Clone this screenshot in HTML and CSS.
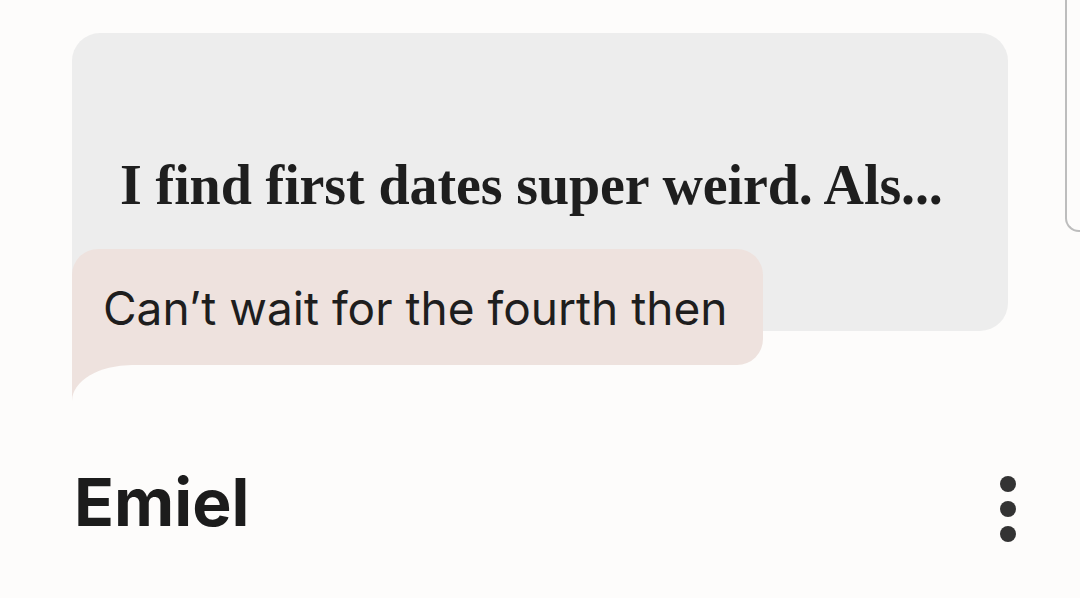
FILE: index.html
```html
<!DOCTYPE html>
<html>
<head>
<meta charset="utf-8">
<link rel="stylesheet" href="styles.css">
</head>
<body>
<div class="scrollbar"></div>
<main class="thread">
  <section class="card">
    <p class="prompt">I find first dates super weird. Als...</p>
  </section>
  <div class="bubble">
    <span class="reply">Can’t wait for the fourth then</span>
  </div>
  <header class="profile">
    <h1 class="name">Emiel</h1>
    <button class="more" aria-label="More">
      <span class="dot"></span><span class="dot"></span><span class="dot"></span>
    </button>
  </header>
</main>
</body>
</html>
```
FILE: styles.css
```css
html, body {
  margin: 0;
  padding: 0;
  background: #fdfcfb;
  width: 1080px;
  height: 598px;
  overflow: hidden;
}
body {
  font-family: "Inter", "Roboto", sans-serif;
  color: #1f1f1f;
}
.scrollbar {
  position: absolute;
  top: -20px;
  left: 1065px;
  width: 40px;
  height: 252px;
  border-left: 2px solid #bdbdbd;
  border-bottom: 2px solid #bdbdbd;
  border-bottom-left-radius: 14px;
  box-sizing: border-box;
}
.thread {
  padding: 33px 72px 0 72px;
  display: flex;
  flex-direction: column;
  align-items: flex-start;
}
.card {
  width: 936px;
  height: 298px;
  box-sizing: border-box;
  background: #ededed;
  border-radius: 28px;
  padding: 0 48px;
  display: flex;
  align-items: center;
}
.prompt {
  margin: 0;
  margin-top: 6px;
  font-family: "Liberation Serif", serif;
  font-weight: bold;
  font-size: 56px;
  letter-spacing: -0.1px;
  color: #1e1e1e;
}
.bubble {
  position: relative;
  margin-top: -82px;
  background: #eee2de;
  border-radius: 26px 26px 26px 0;
  height: 116px;
  box-sizing: border-box;
  padding: 0 36px 0 31px;
  display: flex;
  align-items: center;
}
.bubble::before {
  content: "";
  position: absolute;
  left: 0;
  top: 100%;
  width: 60px;
  height: 36px;
  background: #eee2de;
}
.bubble::after {
  content: "";
  position: absolute;
  left: 0;
  top: 100%;
  width: 60px;
  height: 36px;
  background: #fdfcfb;
  border-top-left-radius: 60px 36px;
}
.reply {
  font-size: 46px;
  font-weight: 400;
  color: #1e1e1e;
  margin-top: 2px;
}
.profile {
  margin-top: 96px;
  width: 936px;
  display: flex;
  justify-content: space-between;
  align-items: center;
}
.name {
  margin: 0;
  font-size: 66px;
  font-weight: 700;
  color: #1c1c1c;
  line-height: 1;
  margin-left: 2px;
}
.more {
  border: 0;
  background: none;
  padding: 0;
  margin-right: -8px;
  margin-top: 15px;
  display: flex;
  flex-direction: column;
  gap: 9px;
}
.dot {
  width: 16px;
  height: 16px;
  border-radius: 50%;
  background: #333;
}
```
